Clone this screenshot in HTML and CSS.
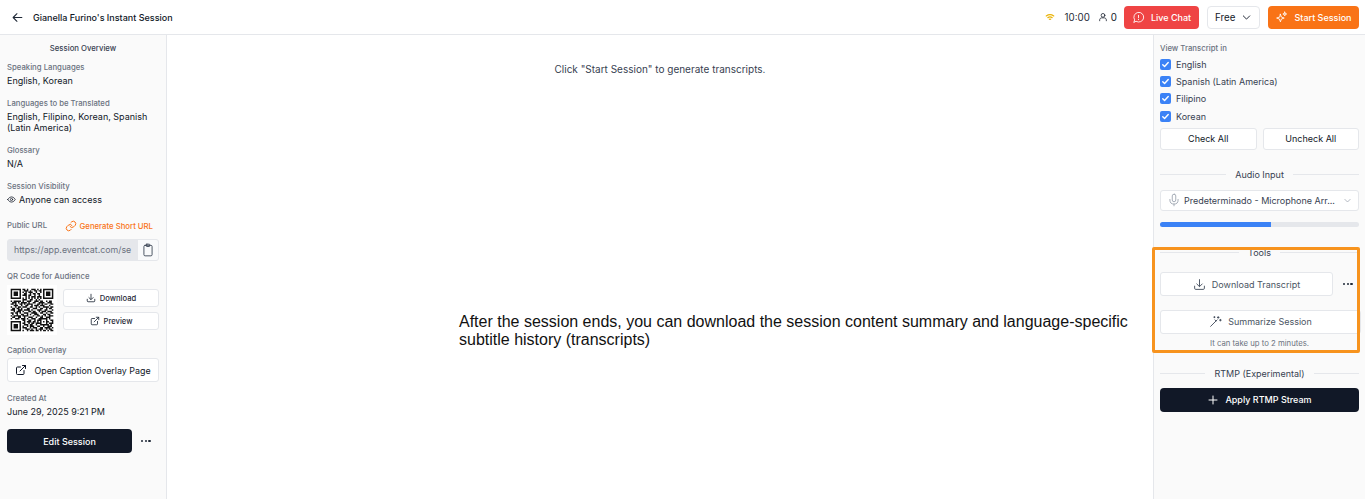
FILE: index.html
```html
<!DOCTYPE html>
<html lang="en">

<head>
    <meta charset="UTF-8">
    <meta name="viewport" content="width=device-width, initial-scale=1.0">
    <title>Instant Session</title>
    <link rel="stylesheet" href="styles.css">
</head>

<body>
    <header class="topbar">
        <div class="topbar-left">
            <svg class="back-icon" viewBox="0 0 24 24"><path d="M20 12H4M11 5l-7 7 7 7"/></svg>
            <span class="session-title">Gianella Furino's Instant Session</span>
        </div>
        <div class="topbar-right">
            <svg class="wifi-icon" viewBox="0 0 24 24"><path d="M3 9.500c5.500-4 12.500-4 18 0M7 13.500c3.200-2.200 6.800-2.200 10 0M10.500 17.500c1-.6 2-.6 3 0"/></svg>
            <span class="timer">10:00</span>
            <span class="viewers">
                <svg viewBox="0 0 24 24"><circle cx="12" cy="8" r="4.500"/><path d="M4 21v-2c0-3 2.500-5 5-5h6c2.500 0 5 2 5 5v2"/></svg>
                0
            </span>
            <button class="btn-chat">
                <svg viewBox="0 0 24 24"><path d="M3.500 20.500l1.400-4.200A9 9 0 1 1 8 19.300z"/><path d="M12 8v4.500M12 15.500v.5"/></svg>
                Live Chat
            </button>
            <button class="btn-plan">Free
                <svg viewBox="0 0 24 24"><path d="M5 8.500l7 7 7-7"/></svg>
            </button>
            <button class="btn-start">
                <svg viewBox="0 0 24 24"><path d="M10 6l1.800 5.200L17 13l-5.200 1.800L10 20l-1.800-5.200L3 13l5.200-1.800zM18 2l.9 2.600 2.600.9-2.600.9L18 9l-.9-2.600-2.600-.9 2.600-.9z"/></svg>
                Start Session
            </button>
        </div>
    </header>

    <div class="layout">
        <aside class="left-panel">
            <h2 class="panel-title">Session Overview</h2>

            <div class="info">
                <div class="label">Speaking Languages</div>
                <div class="value">English, Korean</div>
            </div>
            <div class="info">
                <div class="label">Languages to be Translated</div>
                <div class="value">English, Filipino, Korean, Spanish (Latin America)</div>
            </div>
            <div class="info">
                <div class="label">Glossary</div>
                <div class="value">N/A</div>
            </div>
            <div class="info">
                <div class="label">Session Visibility</div>
                <div class="value visibility">
                    <svg viewBox="0 0 24 24"><path d="M2 12s3.500-7 10-7 10 7 10 7-3.500 7-10 7-10-7-10-7z"/><circle cx="12" cy="12" r="3"/></svg>
                    Anyone can access
                </div>
            </div>

            <div class="url-head">
                <span class="label">Public URL</span>
                <span class="short-url">
                    <svg viewBox="0 0 24 24"><path d="M10 13a5 5 0 0 0 7.500.5l3-3a5 5 0 0 0-7-7l-1.700 1.700"/><path d="M14 11a5 5 0 0 0-7.500-.5l-3 3a5 5 0 0 0 7 7l1.700-1.700"/></svg>
                    Generate Short URL
                </span>
            </div>
            <div class="url-box">
                <span class="url-text">https://app.eventcat.com/se</span>
                <span class="url-copy">
                    <svg viewBox="0 0 24 24"><rect x="5" y="4" width="14" height="18" rx="2"/><rect x="9" y="2" width="6" height="4" rx="1"/></svg>
                </span>
            </div>

            <div class="label qr-label">QR Code for Audience</div>
            <div class="qr-row">
                <svg class="qr" viewBox="-2.500 -2.500 34 34"><path d="M0 .5h7M8 .5h2M11 .5h1M14 .5h3M18 .5h1M20 .5h1M22 .5h7M0 1.500h1M6 1.500h1M9 1.500h3M13 1.500h1M16 1.500h2M19 1.500h2M22 1.500h1M28 1.500h1M0 2.500h1M2 2.500h3M6 2.500h1M8 2.500h1M10 2.500h1M12 2.500h3M17 2.500h1M20 2.500h1M22 2.500h1M24 2.500h3M28 2.500h1M0 3.500h1M2 3.500h3M6 3.500h1M9 3.500h2M13 3.500h1M15 3.500h2M18 3.500h2M22 3.500h1M24 3.500h3M28 3.500h1M0 4.500h1M2 4.500h3M6 4.500h1M8 4.500h3M12 4.500h2M16 4.500h1M19 4.500h1M22 4.500h1M24 4.500h3M28 4.500h1M0 5.500h1M6 5.500h1M10 5.500h1M12 5.500h1M14 5.500h3M18 5.500h3M22 5.500h1M28 5.500h1M0 6.500h7M8 6.500h1M10 6.500h1M12 6.500h1M14 6.500h1M16 6.500h1M18 6.500h1M20 6.500h1M22 6.500h7M8 7.500h3M13 7.500h2M17 7.500h1M19 7.500h1M0 8.500h1M2 8.500h5M8 8.500h1M11 8.500h3M16 8.500h3M20 8.500h2M24 8.500h1M26 8.500h2M1 9.500h3M5 9.500h1M7 9.500h4M12 9.500h1M15 9.500h2M19 9.500h4M25 9.500h3M0 10.500h2M3 10.500h1M6 10.500h2M9 10.500h1M11 10.500h4M18 10.500h2M21 10.500h1M23 10.500h2M27 10.500h2M2 11.500h3M7 11.500h1M10 11.500h2M14 11.500h1M16 11.500h3M20 11.500h3M26 11.500h1M0 12.500h1M3 12.500h1M5 12.500h2M8 12.500h3M13 12.500h2M17 12.500h1M19 12.500h1M22 12.500h4M27 12.500h2M1 13.500h2M4 13.500h2M7 13.500h1M11 13.500h2M15 13.500h3M20 13.500h2M24 13.500h1M26 13.500h2M0 14.500h3M5 14.500h1M6 14.500h2M9 14.500h4M14 14.500h1M18 14.500h3M23 14.500h2M28 14.500h1M2 15.500h1M4 15.500h3M8 15.500h1M12 15.500h2M15 15.500h2M19 15.500h1M21 15.500h3M25 15.500h3M0 16.500h2M3 16.500h2M6 16.500h1M9 16.500h3M14 16.500h4M20 16.500h2M24 16.500h1M27 16.500h2M1 17.500h1M4 17.500h1M7 17.500h2M11 17.500h1M13 17.500h1M16 17.500h3M22 17.500h2M25 17.500h2M0 18.500h1M2 18.500h4M6 18.500h1M8 18.500h4M15 18.500h1M18 18.500h2M21 18.500h1M23 18.500h1M26 18.500h3M1 19.500h2M5 19.500h2M9 19.500h1M12 19.500h3M17 19.500h1M20 19.500h2M24 19.500h3M0 20.500h1M3 20.500h3M7 20.500h3M11 20.500h1M14 20.500h3M19 20.500h6M26 20.500h1M8 21.500h2M12 21.500h2M16 21.500h1M18 21.500h2M20 21.500h1M24 21.500h1M27 21.500h2M0 22.500h7M9 22.500h1M11 22.500h3M15 22.500h2M18 22.500h1M20 22.500h1M22 22.500h1M24 22.500h2M28 22.500h1M0 23.500h1M6 23.500h1M8 23.500h2M12 23.500h1M14 23.500h2M17 23.500h3M20 23.500h1M24 23.500h1M26 23.500h3M0 24.500h1M2 24.500h3M6 24.500h1M9 24.500h3M13 24.500h2M17 24.500h1M20 24.500h6M27 24.500h1M0 25.500h1M2 25.500h3M6 25.500h1M8 25.500h1M11 25.500h1M13 25.500h3M18 25.500h2M22 25.500h1M25 25.500h3M0 26.500h1M2 26.500h3M6 26.500h1M8 26.500h3M13 26.500h1M15 26.500h3M20 26.500h2M23 26.500h4M28 26.500h1M0 27.500h1M6 27.500h1M10 27.500h3M14 27.500h1M17 27.500h1M19 27.500h3M24 27.500h1M26 27.500h2M0 28.500h7M8 28.500h1M11 28.500h1M13 28.500h3M17 28.500h2M20 28.500h1M22 28.500h2M25 28.500h1M27 28.500h2"/></svg>
                <div class="qr-buttons">
                    <button class="btn-small">
                        <svg viewBox="0 0 24 24"><path d="M12 3v12M7 11l5 5 5-5M3 15v4a2 2 0 0 0 2 2h14a2 2 0 0 0 2-2v-4"/></svg>
                        Download
                    </button>
                    <button class="btn-small">
                        <svg viewBox="0 0 24 24"><path d="M18 13v6a2 2 0 0 1-2 2H5a2 2 0 0 1-2-2V8a2 2 0 0 1 2-2h6M15 3h6v6M10 14L21 3"/></svg>
                        Preview
                    </button>
                </div>
            </div>

            <div class="label caption-label">Caption Overlay</div>
            <button class="btn-overlay">
                <svg viewBox="0 0 24 24"><path d="M18 13v6a2 2 0 0 1-2 2H5a2 2 0 0 1-2-2V8a2 2 0 0 1 2-2h6M15 3h6v6M10 14L21 3"/></svg>
                Open Caption Overlay Page
            </button>

            <div class="info created">
                <div class="label">Created At</div>
                <div class="value">June 29, 2025 9:21 PM</div>
            </div>

            <div class="edit-row">
                <button class="btn-dark btn-edit">Edit Session</button>
                <span class="dots"><i></i><i></i><i></i></span>
            </div>
        </aside>

        <main class="content">
            <p class="hint">Click "Start Session" to generate transcripts.</p>
            <p class="note">After the session ends, you can download the session content summary and language-specific subtitle history (transcripts)</p>
        </main>

        <aside class="right-panel">
            <div class="label">View Transcript in</div>
            <ul class="lang-list">
                <li><span class="check"><svg viewBox="0 0 24 24"><path d="M6 12.500l4 4 8-9"/></svg></span>English</li>
                <li><span class="check"><svg viewBox="0 0 24 24"><path d="M6 12.500l4 4 8-9"/></svg></span>Spanish (Latin America)</li>
                <li><span class="check"><svg viewBox="0 0 24 24"><path d="M6 12.500l4 4 8-9"/></svg></span>Filipino</li>
                <li><span class="check"><svg viewBox="0 0 24 24"><path d="M6 12.500l4 4 8-9"/></svg></span>Korean</li>
            </ul>
            <div class="check-buttons">
                <button class="btn-light">Check All</button>
                <button class="btn-light">Uncheck All</button>
            </div>

            <div class="divider audio-divider">Audio Input</div>
            <div class="select">
                <svg class="mic" viewBox="0 0 24 24"><rect x="9" y="2" width="6" height="13" rx="3"/><path d="M5 11v1a7 7 0 0 0 14 0v-1M12 19v3"/></svg>
                <span class="select-text">Predeterminado - Microphone Arr...</span>
                <svg class="caret" viewBox="0 0 24 24"><path d="M5 9l7 7 7-7"/></svg>
            </div>
            <div class="progress"><div class="progress-fill" style="width: 56%"></div></div>

            <section class="tools">
                <div class="divider">Tools</div>
                <div class="download-row">
                    <button class="btn-tool">
                        <svg viewBox="0 0 24 24"><path d="M12 3v12M7 11l5 5 5-5M3 15v4a2 2 0 0 0 2 2h14a2 2 0 0 0 2-2v-4"/></svg>
                        Download Transcript
                    </button>
                    <span class="dots"><i></i><i></i><i></i></span>
                </div>
                <button class="btn-tool btn-summarize">
                    <svg viewBox="0 0 24 24"><path d="M3 21L15 9M17 3v3M15.500 4.500h3M21 8v3M19.500 9.500h3M10 3v2M9 4h2M13 11l-2-2"/></svg>
                    Summarize Session
                </button>
                <div class="tools-hint">It can take up to 2 minutes.</div>
                <div class="highlight"></div>
            </section>

            <div class="divider rtmp-divider">RTMP (Experimental)</div>
            <button class="btn-dark btn-rtmp">
                <svg viewBox="0 0 24 24"><path d="M12 4v16M4 12h16"/></svg>
                Apply RTMP Stream
            </button>
        </aside>
    </div>
</body>

</html>
```

FILE: styles.css
```css
* {
    margin: 0;
    padding: 0;
    box-sizing: border-box;
    font-family: "Inter", sans-serif;
}

html,
body {
    height: 499px;
    overflow: hidden;
    background-color: #fff;
    color: #111827;
}

button {
    cursor: pointer;
    font-weight: 500;
}

svg {
    fill: none;
    stroke: currentColor;
    stroke-width: 2;
    stroke-linecap: round;
    stroke-linejoin: round;
    flex-shrink: 0;
}

.topbar {
    height: 35px;
    display: flex;
    justify-content: space-between;
    align-items: center;
    padding: 0 6px 0 11px;
    border-bottom: 1px solid #e5e7eb;
}

.topbar-left,
.topbar-right {
    display: flex;
    align-items: center;
}

.back-icon {
    width: 13px;
    height: 13px;
    margin-right: 9px;
    color: #1f2937;
}

.session-title {
    font-size: 9px;
    font-weight: 500;
}

.wifi-icon {
    width: 10px;
    height: 10px;
    color: #eab308;
    stroke-width: 3;
    margin-right: 10px;
}

.timer {
    font-size: 9.750px;
    margin-right: 8px;
    color: #1f2937;
}

.viewers {
    display: flex;
    align-items: center;
    gap: 3px;
    font-size: 9.750px;
    margin-right: 7px;
}

.viewers svg {
    width: 10px;
    height: 10px;
    stroke-width: 1.800;
}

.btn-chat,
.btn-start {
    height: 23px;
    border: none;
    border-radius: 4px;
    color: #fff;
    font-size: 9px;
    display: flex;
    align-items: center;
    justify-content: center;
    gap: 6px;
}

.btn-chat {
    width: 75px;
    background-color: #ef4444;
}

.btn-chat svg,
.btn-start svg {
    width: 13px;
    height: 13px;
    stroke-width: 1.600;
}

.btn-plan {
    width: 53px;
    height: 23px;
    margin: 0 8px;
    display: flex;
    align-items: center;
    justify-content: space-between;
    padding: 0 7px;
    background-color: #fff;
    border: 1px solid #e5e7eb;
    border-radius: 4px;
    font-size: 9.750px;
    color: #111827;
    font-weight: 400;
}

.btn-plan svg {
    width: 11px;
    height: 11px;
}

.btn-start {
    width: 91px;
    background-color: #f97316;
}

.layout {
    display: flex;
    height: 464px;
}

.left-panel {
    width: 167px;
    padding: 8px 7px 0;
    background-color: #fafafa;
    border-right: 1px solid #e5e7eb;
}

.panel-title {
    font-size: 7.750px;
    font-weight: 500;
    text-align: center;
    color: #374151;
    line-height: 11px;
    margin-bottom: 8px;
}

.label {
    font-size: 7.750px;
    font-weight: 500;
    color: #6b7280;
    line-height: 11px;
}

.value {
    font-size: 9px;
    line-height: 11px;
    color: #111827;
    margin-top: 2px;
}

.info {
    margin-bottom: 12px;
}

.visibility {
    display: flex;
    align-items: center;
    gap: 3px;
}

.visibility svg {
    width: 9px;
    height: 9px;
}

.url-head {
    display: flex;
    justify-content: space-between;
    align-items: center;
    height: 13px;
    margin-top: 14px;
}

.short-url {
    display: flex;
    align-items: center;
    gap: 3px;
    font-size: 7.750px;
    font-weight: 500;
    color: #f97316;
    margin-right: 6px;
}

.short-url svg {
    width: 12px;
    height: 12px;
}

.url-box {
    display: flex;
    height: 22px;
    margin-top: 7px;
    background-color: #e5e7eb;
    border: 1px solid #e5e7eb;
    border-radius: 3px;
    overflow: hidden;
}

.url-text {
    flex: 1;
    font-size: 8.800px;
    line-height: 20px;
    padding-left: 6px;
    color: #6b7280;
    white-space: nowrap;
    overflow: hidden;
}

.url-copy {
    width: 20px;
    background-color: #f9fafb;
    display: flex;
    align-items: center;
    justify-content: center;
}

.url-copy svg {
    width: 14px;
    height: 14px;
    stroke-width: 1.500;
    color: #374151;
}

.qr-label {
    margin-top: 10px;
}

.qr-row {
    display: flex;
    justify-content: space-between;
    margin-top: 3px;
}

.qr {
    width: 50px;
    height: 50px;
    background-color: #fff;
    stroke: #111;
    stroke-width: 1;
    stroke-linecap: butt;
}

.qr-buttons {
    width: 96px;
    display: flex;
    flex-direction: column;
    gap: 5px;
    padding-top: 4px;
}

.btn-small {
    height: 18px;
    background-color: #fff;
    border: 1px solid #e5e7eb;
    border-radius: 3px;
    font-size: 7.600px;
    color: #1f2937;
    display: flex;
    align-items: center;
    justify-content: center;
    gap: 4px;
}

.btn-small svg {
    width: 10px;
    height: 10px;
}

.caption-label {
    margin-top: 10px;
}

.btn-overlay {
    width: 100%;
    height: 24px;
    margin-top: 2px;
    background-color: #fff;
    border: 1px solid #e5e7eb;
    border-radius: 3px;
    font-size: 8.900px;
    font-weight: 400;
    color: #111827;
    display: flex;
    align-items: center;
    justify-content: center;
    gap: 7px;
}

.btn-overlay svg {
    width: 12px;
    height: 12px;
}

.created {
    margin-top: 11px;
    margin-bottom: 0;
}

.edit-row {
    display: flex;
    align-items: center;
    margin-top: 12px;
}

.btn-dark {
    background-color: #111827;
    color: #fff;
    border: none;
    border-radius: 4px;
    font-size: 9px;
}

.btn-edit {
    width: 125px;
    height: 24px;
}

.dots {
    display: flex;
    gap: 1.500px;
    margin-left: 9px;
}

.dots i {
    width: 2.200px;
    height: 2.200px;
    border-radius: 50%;
    background-color: #1f2937;
}

.content {
    flex: 1;
    display: flex;
    flex-direction: column;
    background-color: #fff;
}

.hint {
    font-size: 10px;
    line-height: 14px;
    color: #374151;
    text-align: center;
    margin-top: 27px;
}

.note {
    width: 680px;
    margin: 237px 0 0 292px;
    font-family: "Liberation Sans", sans-serif;
    font-size: 16px;
    line-height: 18px;
    color: #111;
}

.right-panel {
    width: 212px;
    padding: 8px 6px 0;
    background-color: #fafafa;
    border-left: 1px solid #e5e7eb;
}

.lang-list {
    list-style: none;
    margin-top: 2px;
}

.lang-list li {
    height: 17.200px;
    display: flex;
    align-items: center;
    gap: 5px;
    font-size: 9px;
    color: #374151;
}

.check {
    width: 11px;
    height: 11px;
    border-radius: 2px;
    background-color: #3b82f6;
    display: flex;
    color: #fff;
}

.check svg {
    stroke-width: 3;
}

.check-buttons {
    display: flex;
    gap: 6px;
    margin-top: 3.200px;
}

.btn-light {
    flex: 1;
    height: 22px;
    background-color: #fff;
    border: 1px solid #e5e7eb;
    border-radius: 3px;
    font-size: 9px;
    font-weight: 400;
    color: #111827;
}

.divider {
    display: flex;
    align-items: center;
    gap: 9px;
    font-size: 9px;
    line-height: 11px;
    color: #374151;
}

.divider::before,
.divider::after {
    content: "";
    flex: 1;
    border-top: 1px solid #e5e7eb;
}

.audio-divider {
    margin-top: 19px;
}

.select {
    height: 21px;
    margin-top: 10px;
    display: flex;
    align-items: center;
    padding: 0 6px;
    background-color: #fff;
    border: 1px solid #e5e7eb;
    border-radius: 3px;
}

.mic {
    width: 14px;
    height: 14px;
    color: #9ca3af;
    stroke-width: 1.500;
}

.select-text {
    flex: 1;
    font-size: 9px;
    color: #374151;
    margin-left: 3px;
    white-space: nowrap;
}

.caret {
    width: 9px;
    height: 9px;
    color: #9ca3af;
}

.progress {
    height: 5px;
    margin-top: 11px;
    background-color: #e5e7eb;
    border-radius: 3px;
    overflow: hidden;
}

.progress-fill {
    height: 100%;
    background-color: #3b82f6;
}

.tools {
    position: relative;
    margin-top: 20px;
}

.download-row {
    display: flex;
    align-items: center;
    margin-top: 14px;
}

.btn-tool {
    height: 24px;
    padding-top: 1px;
    background-color: #fff;
    border: 1px solid #e5e7eb;
    border-radius: 3px;
    font-size: 9px;
    font-weight: 400;
    color: #4b5563;
    display: flex;
    align-items: center;
    justify-content: center;
    gap: 6px;
}

.btn-tool svg {
    width: 13px;
    height: 13px;
    stroke-width: 1.600;
    color: #374151;
}

.download-row .btn-tool {
    width: 173px;
}

.download-row .dots {
    margin-left: 10px;
}

.btn-summarize {
    width: 201px;
    margin-top: 14px;
    padding-top: 0;
}

.tools-hint {
    font-size: 7.750px;
    line-height: 11px;
    color: #6b7280;
    text-align: center;
    margin-top: 4px;
}

.highlight {
    position: absolute;
    left: -8px;
    right: -1px;
    top: 0;
    height: 106px;
    border: 3px solid #f7931e;
    border-radius: 2px;
    pointer-events: none;
}

.rtmp-divider {
    margin-top: 19px;
}

.btn-rtmp {
    width: 100%;
    height: 24px;
    margin-top: 9px;
    display: flex;
    align-items: center;
    justify-content: center;
    gap: 6px;
}

.btn-rtmp svg {
    width: 12px;
    height: 12px;
}
```
